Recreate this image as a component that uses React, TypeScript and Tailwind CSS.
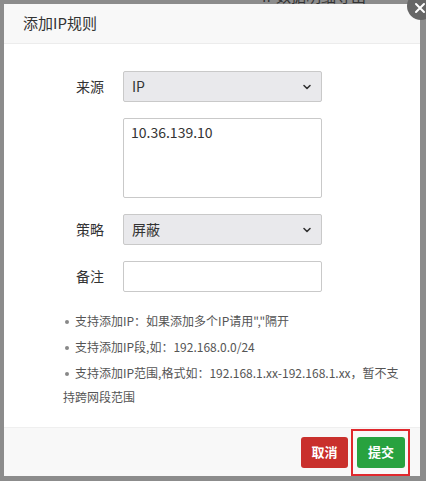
import React from "react";

const font = { fontFamily: '"Noto Sans CJK SC", "Noto Sans", sans-serif' };

function Chevron() {
  return (
    <svg width="10" height="10" viewBox="0 0 10 10" className="absolute right-[9px] top-1/2 -translate-y-1/2">
      <path d="M2 3.5 L5 6.5 L8 3.5" fill="none" stroke="#333" strokeWidth="1.6" strokeLinecap="round" strokeLinejoin="round" />
    </svg>
  );
}

function SelectBox({ value }: { value: string }) {
  return (
    <div className="relative w-[199px] h-[31px] bg-[#e9e9ec] border border-[#c9c9c9] rounded-[2px] flex items-center pl-[8px] text-[14px] text-[#333]">
      {value}
      <Chevron />
    </div>
  );
}

function Dot() {
  return <span className="inline-block w-[4px] h-[4px] rounded-full bg-[#888] align-middle mr-[6px] mb-[2px]" />;
}

export default function App() {
  return (
    <div className="relative w-[426px] h-[481px] bg-[#8c8c8c] overflow-hidden" style={font}>
      <div className="absolute left-[262px] top-[-15px] text-[15px] text-[#333] whitespace-nowrap">IP数据明细导出</div>
      <div className="absolute left-[4px] top-[4px] w-[416px] h-[472px] bg-white flex flex-col">
        <div className="h-[40px] bg-[#f8f8f8] border-b border-[#ececec] flex items-center pl-[19px] text-[15px] text-[#333] shrink-0">
          添加IP规则
        </div>
        <div className="flex-1 flex flex-col pt-[27px]">
          <div className="flex items-center">
            <div className="w-[100px] text-right text-[14px] text-[#333]">来源</div>
            <div className="ml-[19px]"><SelectBox value="IP" /></div>
          </div>
          <div className="flex mt-[16px]">
            <div className="w-[100px]" />
            <div className="ml-[19px] w-[199px] h-[80px] border border-[#c9c9c9] rounded-[2px] px-[7px] pt-[3px] text-[14px] text-[#333]">
              10.36.139.10
            </div>
          </div>
          <div className="flex items-center mt-[16px]">
            <div className="w-[100px] text-right text-[14px] text-[#333]">策略</div>
            <div className="ml-[19px]"><SelectBox value="屏蔽" /></div>
          </div>
          <div className="flex items-center mt-[16px]">
            <div className="w-[100px] text-right text-[14px] text-[#333]">备注</div>
            <div className="ml-[19px] w-[199px] h-[31px] border border-[#c9c9c9] rounded-[2px]" />
          </div>
          <div className="mt-[16px] text-[12px] text-[#555] leading-[26px] whitespace-nowrap">
            <div className="pl-[61px]"><Dot />支持添加IP：如果添加多个IP请用","隔开</div>
            <div className="pl-[61px]"><Dot />支持添加IP段,如：192.168.0.0/24</div>
            <div className="pl-[61px]"><Dot />支持添加IP范围,格式如：192.168.1.xx-192.168.1.xx，暂不支</div>
            <div className="pl-[59px] leading-[22px]">持跨网段范围</div>
          </div>
        </div>
        <div className="h-[49px] bg-[#f8f8f8] border-t border-[#efefef] flex items-center justify-end pr-[15px] gap-[9px] shrink-0 relative">
          <div className="w-[47px] h-[31px] rounded-[3px] bg-[#c9302c] text-white text-[13px] font-bold flex items-center justify-center">取消</div>
          <div className="relative">
            <div className="w-[48px] h-[31px] rounded-[3px] bg-[#28a23f] text-white text-[13px] font-bold flex items-center justify-center">提交</div>
            <div className="absolute left-[-6px] top-[-8px] w-[59px] h-[47px] border-2 border-[#e0282d]" />
          </div>
        </div>
      </div>
      <div className="absolute left-[407px] top-[-8px] w-[28px] h-[28px] rounded-full bg-[#666] flex items-center justify-center">
        <svg width="12" height="12" viewBox="0 0 12 12" className="mt-[3px] ml-[-2px]">
          <path d="M2 2 L10 10 M10 2 L2 10" stroke="#fff" strokeWidth="2" strokeLinecap="round" />
        </svg>
      </div>
    </div>
  );
}
